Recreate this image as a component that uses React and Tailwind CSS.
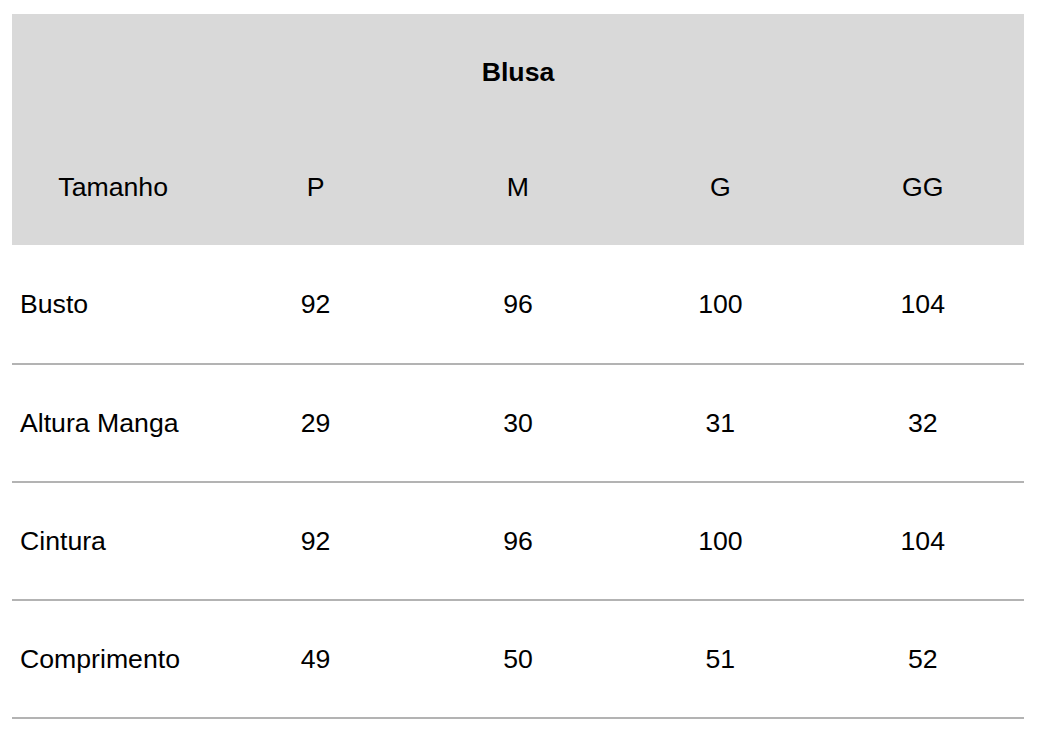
const sizes = ["P", "M", "G", "GG"]

const rows = [
    { label: "Busto", values: ["92", "96", "100", "104"] },
    { label: "Altura Manga", values: ["29", "30", "31", "32"] },
    { label: "Cintura", values: ["92", "96", "100", "104"] },
    { label: "Comprimento", values: ["49", "50", "51", "52"] },
]

export default function App() {
    return (
        <div className="min-h-screen bg-white pt-[14px] pl-[12px] font-['Liberation_Sans',Arial,sans-serif] text-[26.67px] text-black">
            <table className="w-[1012px] table-fixed border-collapse">
                <thead className="bg-[#d9d9d9]">
                    <tr className="h-[115px]">
                        <th colSpan={5} className="text-center font-bold">Blusa</th>
                    </tr>
                    <tr className="h-[116px]">
                        <th className="text-center font-normal">Tamanho</th>
                        {sizes.map((s) => (
                            <th key={s} className="text-center font-normal">{s}</th>
                        ))}
                    </tr>
                </thead>
                <tbody>
                    {rows.map((row, r) => (
                        <tr key={row.label} className={`${r === 0 ? "h-[119px]" : "h-[118px]"} border-b-2 border-[#b3b3b3]`}>
                            <td className="pl-2 text-left">{row.label}</td>
                            {row.values.map((v, i) => (
                                <td key={i} className="text-center">{v}</td>
                            ))}
                        </tr>
                    ))}
                </tbody>
            </table>
        </div>
    )
}
